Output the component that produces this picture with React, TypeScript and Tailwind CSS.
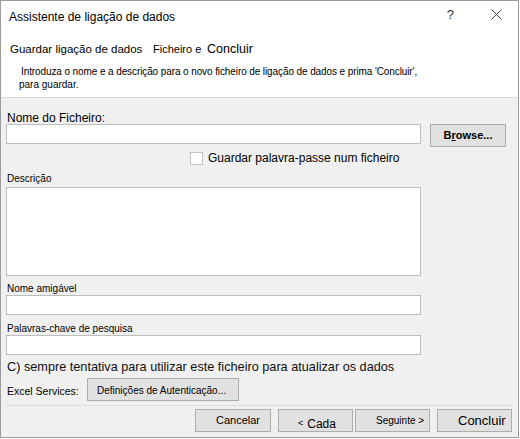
export default function App() {
  const input = 'h-[20px] w-[415px] border border-[#bdbdbd] bg-white'
  const btn = 'flex h-[23px] items-center border border-[#adadad] bg-[#e1e1e1] text-black'

  return (
    <div className="h-[439px] w-[520px] bg-white font-['Liberation_Sans',Arial,sans-serif] text-black">
      <div className="flex h-[438px] w-[519px] flex-col border border-[#9b9b9b] bg-[#f0f0f0]">
        {/* header */}
        <div className="h-[97px] border-b border-[#dadada] bg-white">
          <div className="flex h-[31px] items-start">
            <div className="mt-[10px] flex-1 pl-[8px] text-[12px] leading-[13px]">Assistente de ligação de dados</div>
            <div className="mt-[7px] mr-[37px] text-[13px] leading-[13px] text-[#333]">?</div>
            <svg className="mt-[8px] mr-[16px]" width="11" height="11" viewBox="0 0 11 11">
              <path d="M0.5 0.5L10.5 10.5M10.5 0.5L0.5 10.5" stroke="#444" strokeWidth="1" fill="none" />
            </svg>
          </div>
          <div className="mt-[10px] flex items-baseline pl-[9px] leading-[14px]">
            <span className="w-[143px] text-[11.5px]">Guardar ligação de dados</span>
            <span className="w-[54px] align-[2px] text-[11px]">Ficheiro e</span>
            <span className="text-[12.5px]">Concluir</span>
          </div>
          <div className="mt-[9px] text-[10px] leading-[13px]">
            <div className="pl-[20px] tracking-[-0.1px]">
              Introduza o nome e a descrição para o novo ficheiro de ligação de dados e prima 'Concluir',
            </div>
            <div className="pl-[18px]">para guardar.</div>
          </div>
        </div>

        {/* body */}
        <div className="flex flex-1 flex-col pl-[5px]">
          <div className="pt-[15px] pl-[1px] text-[12px] leading-[11px]">Nome do Ficheiro:</div>
          <div className="flex items-start">
            <div className={input} />
            <div className={`${btn} ml-[9px] w-[76px] justify-center text-[11px] font-bold text-[#222]`}>
              B<span className="underline">r</span>owse...
            </div>
          </div>

          <div className="mt-[5px] flex h-[13px] items-center">
            <div className="ml-[184px] h-[13px] w-[13px] border border-[#c2c2c2] bg-white" />
            <div className="ml-[5px] text-[12px] leading-[13px]">Guardar palavra-passe num ficheiro</div>
          </div>

          <div className="pt-[9px] pl-[1px] text-[10px] leading-[10px]">Descrição</div>
          <div className="mt-[3px] h-[89px] w-[415px] border border-[#bdbdbd] bg-white" />

          <div className="mt-[8px] pl-[1px] text-[10px] leading-[10px]">Nome amigável</div>
          <div className={`mt-[1px] ${input}`} />

          <div className="mt-[9px] pl-[1px] text-[10px] leading-[10px]">Palavras-chave de pesquisa</div>
          <div className={`mt-[1px] ${input}`} />

          <div className="mt-[5px] pl-[1px] text-[12.7px] leading-[14px] text-[#111]">
            C) sempre tentativa para utilizar este ficheiro para atualizar os dados
          </div>

          <div className="mt-[4px] flex h-[22px] items-center">
            <div className="w-[81px] pt-[3px] pl-[1px] text-[10.5px] leading-[12px]">Excel Services:</div>
            <div className={`${btn} h-[22px] w-[152px] pt-[3px] pl-[9px] text-[10px]`}>Definições de Autenticação...</div>
          </div>

          <div className="mt-[5px] h-px w-[507px] bg-[#dcdcdc]" />

          <div className="mt-[3px] flex justify-end pr-[6px]">
            <div className={`${btn} w-[76px] pl-[20px] text-[11px]`}>Cancelar</div>
            <div className={`${btn} ml-[7px] w-[75px] pt-[6px] pl-[19px] text-[12px]`}>
              <span className="mr-[4px] align-[3px] text-[9px]">&lt;</span>Cada
            </div>
            <div className={`${btn} ml-[2px] w-[75px] pl-[20px] text-[10px]`}>Seguinte &gt;</div>
            <div className={`${btn} ml-[7px] w-[75px] pl-[20px] text-[13px]`}>Concluir</div>
          </div>
        </div>
      </div>
    </div>
  )
}
